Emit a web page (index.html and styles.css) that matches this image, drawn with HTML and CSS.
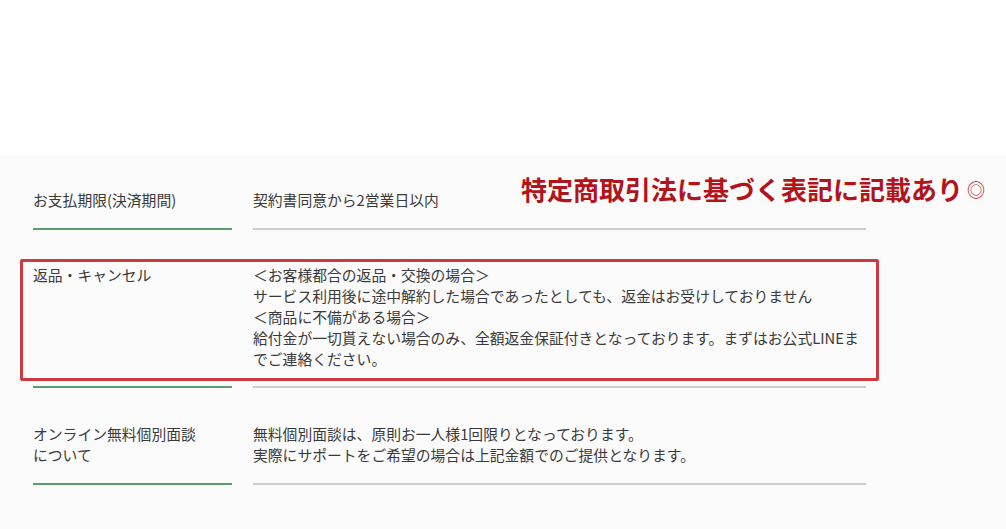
FILE: index.html
```html
<!DOCTYPE html>
<html lang="ja">
<head>
<meta charset="utf-8">
<link rel="stylesheet" href="styles.css">
</head>
<body>
<div class="top"></div>
<section class="info">
  <p class="note">特定商取引法に基づく表記に記載あり<span class="mark">◎</span></p>
  <dl class="table">
    <div class="row">
      <dt>お支払期限(決済期間)</dt>
      <dd>契約書同意から2営業日以内</dd>
    </div>
    <div class="row marked">
      <dt>返品・キャンセル</dt>
      <dd>＜お客様都合の返品・交換の場合＞<br>サービス利用後に途中解約した場合であったとしても、返金はお受けしておりません<br>＜商品に不備がある場合＞<br>給付金が一切貰えない場合のみ、全額返金保証付きとなっております。まずはお公式LINEまでご連絡ください。</dd>
      <div class="redbox"></div>
    </div>
    <div class="row last">
      <dt>オンライン無料個別面談<br>について</dt>
      <dd>無料個別面談は、原則お一人様1回限りとなっております。<br>実際にサポートをご希望の場合は上記金額でのご提供となります。</dd>
    </div>
  </dl>
</section>
</body>
</html>
```

FILE: styles.css
```css
html, body {
  margin: 0;
  padding: 0;
  background: #fbfbfb;
  font-family: "Noto Sans CJK JP", "Noto Sans", sans-serif;
  color: #3a3a3a;
}
.top {
  height: 155px;
  background: #ffffff;
}
.info {
  position: relative;
  padding: 0 0 0 33px;
  width: 833px;
}
.note {
  position: absolute;
  left: 521px;
  top: 15px;
  margin: 0;
  font-size: 26px;
  font-weight: 700;
  color: #b3131b;
  line-height: 38px;
  letter-spacing: 0;
  white-space: nowrap;
}
.note .mark {
  font-size: 18px;
  font-weight: 400;
  margin-left: 4px;
  vertical-align: 3px;
}
.table {
  margin: 0;
  padding: 0;
}
.row {
  position: relative;
  display: flex;
  gap: 21px;
}
.row dt,
.row dd {
  margin: 0;
  font-size: 14.8px;
  line-height: 21px;
  padding: 34px 0 18px;
}
.row dt {
  width: 199px;
  flex: none;
  border-bottom: 2px solid #5b9d6b;
}
.row dd {
  flex: 1;
  border-bottom: 2px solid #cccccc;
}
.row.marked dd,
.row.marked dt {
  padding-top: 34px;
  padding-bottom: 17px;
}
.row.last dd,
.row.last dt {
  padding-top: 35px;
  padding-bottom: 18px;
}
.redbox {
  position: absolute;
  left: -13px;
  right: -13px;
  top: 29px;
  bottom: 7px;
  border: 3px solid #cf3a41;
  border-radius: 2px;
  pointer-events: none;
}
```
